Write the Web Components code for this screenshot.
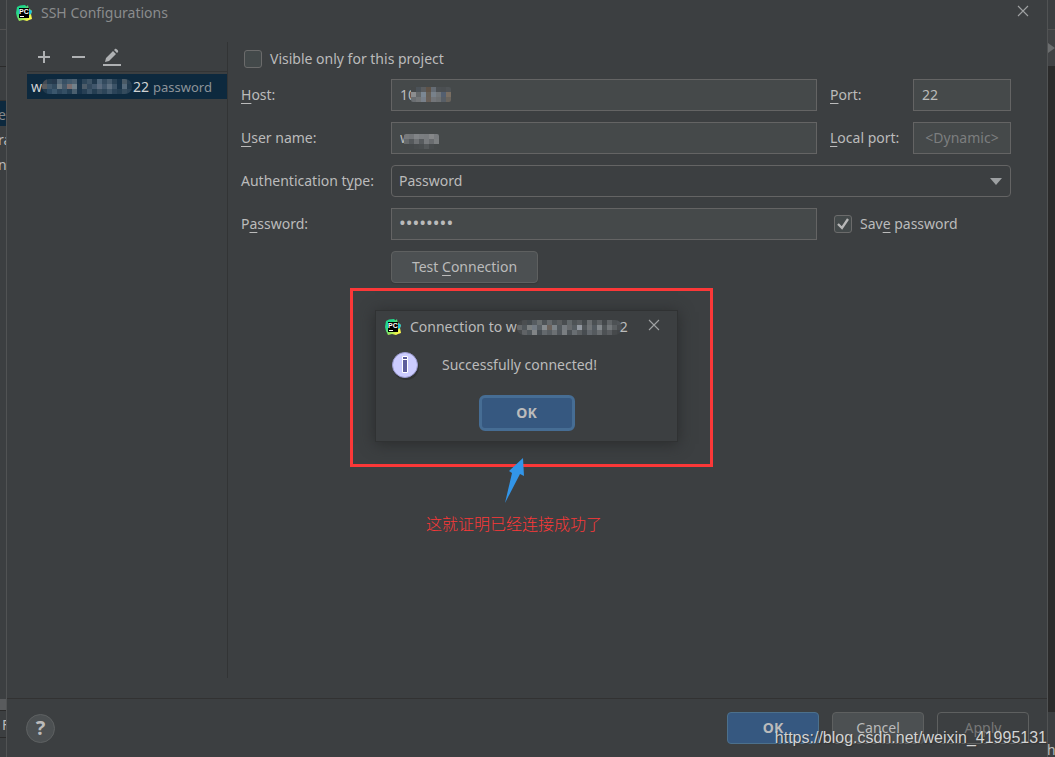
<!DOCTYPE html>
<html lang="en">
<head>
<meta charset="utf-8">
<title>SSH Configurations</title>
<style>
html, body { margin: 0; background: #3c3f41; }
body { font: 14px/20px "Noto Sans", "Noto Sans CJK SC", sans-serif; color: #bbbbbb; }
</style>
</head>
<body>
<ssh-app></ssh-app>

<template id="t-app">
<style>
:host { display: grid; grid-template-columns: 6px 1fr 7px; min-height: 100vh; position: relative; overflow: hidden; }
.watermark { position: absolute; right: 8px; bottom: 9px; font: 16px/20px "Liberation Sans", sans-serif; color: #d2d3d3; text-shadow: 1px 1px 1px #333; white-space: nowrap; }
</style>
<edge-strip side="left"></edge-strip>
<config-dialog></config-dialog>
<edge-strip side="right"></edge-strip>
<span class="watermark">https://blog.csdn.net/weixin_41995131</span>
</template>

<template id="t-strip">
<style>
:host { display: flex; flex-direction: column; overflow: hidden; background: #3c3f41; white-space: nowrap; }
div { flex: none; box-sizing: border-box; overflow: hidden; }
.toolbar { height: 30px; border-bottom: 1px solid #515151; }
.tabs { height: 37px; border-bottom: 1px solid #2b2b2b; }
.gap { height: 34px; border-bottom: 1px solid #323232; }
.row { height: 25px; line-height: 27px; text-indent: -2px; }
.sel { background: #0d293e; color: #888; }
.fill { flex: 1; }
.bar { height: 11px; background: #595b5d; }
.foot { height: 28px; border: solid #2b2b2b; border-width: 1px 0; line-height: 28px; padding-left: 2px; }
.end { height: 19px; }
.run { height: 36px; background: #414345; display: flex; align-items: center; }
.dark { flex: 1; background: #2b2b2b; }
.low { height: 45px; line-height: 20px; padding-top: 28px; }
:host([side="right"]) .low { text-indent: -1px; }
</style>
</template>

<template id="t-dialog">
<style>
:host { display: flex; flex-direction: column; position: relative; background: #3c3f41; border: solid #515354; border-width: 0 1px; box-sizing: border-box; min-width: 0; }
header { display: flex; align-items: center; height: 26px; padding: 0 18px 0 8px; color: #8a8c8d; }
header span { flex: 1; margin-left: 8px; }
close-button { padding-bottom: 4px; }
main { flex: 1; display: grid; grid-template-columns: 201px 1fr; padding: 16px 36px 20px 20px; column-gap: 13px; }
footer { display: flex; align-items: center; gap: 13px; border-top: 1px solid #323232; padding: 13px 18px 13px 19px; }
.space { flex: 1; }
.layer { position: absolute; top: 288px; left: 0; right: 0; display: flex; justify-content: center; padding-left: 9px; pointer-events: none; }
</style>
<header><app-logo></app-logo><span>SSH Configurations</span><close-button></close-button></header>
<main><config-list></config-list><config-form></config-form></main>
<footer>
<help-button></help-button><span class="space"></span>
<ide-button kind="primary">OK</ide-button><ide-button>Cancel</ide-button><ide-button kind="disabled">Apply</ide-button>
</footer>
<div class="layer"><result-note></result-note></div>
</template>

<template id="t-logo">
<style>:host { display: block; width: 18px; height: 18px; flex: none; } svg { display: block; } text { font: bold 7px "Liberation Sans", sans-serif; fill: #fff; }</style>
<svg width="18" height="18" viewBox="0 0 18 18">
<defs><linearGradient id="g" x1="0" y1="0" x2="1" y2="1"><stop offset=".3" stop-color="#21d789"/><stop offset=".6" stop-color="#9be65a"/><stop offset=".85" stop-color="#fcf84a"/></linearGradient></defs>
<path d="M5 1.500 10 1l1.500 1.500L13 1l.5 3L17 7l-1 3 1 5-3 1-2 1-4-1-4 1-2-4-1-4 1-6z" fill="url(#g)"/>
<path d="m14 5 3 2-1 3-2 1z" fill="#16bfe0"/>
<path d="M4 4h10v10H4z" fill="#000"/><text x="4" y="10">PC</text><path d="M5 12.500h4" stroke="#fff"/>
</svg>
</template>

<template id="t-close">
<style>:host { display: block; } button { display: block; padding: 0; border: 0; background: none; color: #a0a2a3; } svg { display: block; }</style>
<button aria-label="Close"><svg width="12" height="12" viewBox="0 0 12 12"><path d="m1 1 10 10M11 1 1 11" stroke="currentColor" stroke-width="1.100"/></svg></button>
</template>

<template id="t-help">
<style>:host { display: block; } button { display: grid; place-items: center; width: 29px; height: 29px; border: 1px solid #5e6162; border-radius: 50%; background: #4c5052; color: #bbb; padding: 0; font: bold 20px/20px "Noto Sans", sans-serif; }</style>
<button aria-label="Help">?</button>
</template>

<template id="t-button">
<style>
:host { display: block; }
button { box-sizing: border-box; width: 92px; height: 32px; padding: 0; border: 1px solid #5e6060; border-radius: 4px; background: #4c5052; color: #bbb; font: inherit; }
:host([kind="primary"]) button { background: #365880; border-color: #4c708c; font-weight: bold; }
:host([kind="disabled"]) button { background: #3c3f41; color: #777; }
:host([kind="wide"]) button { width: 147px; box-shadow: 0 1px 1px #35383a; }
:host([kind="focus"]) button { width: 96px; height: 36px; background: #365880; border: 3px solid #466d94; border-radius: 6px; font-weight: bold; }
u { text-underline-offset: 3px; }
</style>
<button><slot></slot></button>
</template>

<template id="t-list">
<style>
:host { display: block; border-right: 1px solid #323435; }
nav { display: flex; gap: 14px; height: 30px; align-items: center; padding-left: 7px; box-sizing: border-box; border-bottom: 1px solid #323435; }
nav button { display: block; width: 20px; height: 20px; padding: 0; border: 0; background: none; }
svg { display: block; }
.item { display: flex; align-items: center; height: 25px; margin-top: 2px; padding-left: 4px; background: #0d293e; color: #d0d2d3; }
.type { margin-left: 4px; color: #8c9399; font-size: 13px; }
pixel-mask { margin-right: 1px; }
</style>
<nav>
<button aria-label="Add"><svg width="20" height="20"><path d="M10 4v12M4 10h12" stroke="#afb1b3" stroke-width="2"/></svg></button>
<button aria-label="Remove"><svg width="20" height="20"><path d="M4 10h13" stroke="#afb1b3" stroke-width="2"/></svg></button>
<button aria-label="Edit"><svg width="20" height="20"><path d="m3 15 1-4 7-7 3 3-7 7zM12 3l1-1c1-1 4 2 3 3l-1 1zM1 17h18v2H1z" fill="#afb1b3"/></svg></button>
</nav>
<div class="item"><span>w</span><pixel-mask kind="list"></pixel-mask><span>22</span><span class="type">password</span></div>
</template>

<template id="t-form">
<style>
:host { display: grid; grid-template-columns: 150px 1fr 96px 98px; grid-template-rows: 18px repeat(5, 32px); row-gap: 11px; align-items: center; padding-top: 8px; align-content: start; }
.gapped { padding-left: 13px; white-space: nowrap; }
u { text-underline-offset: 3px; text-decoration-thickness: 1px; }
input:not([type="checkbox"]), select { box-sizing: border-box; width: 100%; height: 32px; border: 1px solid #646464; background: #45494a; color: #bbb; font: inherit; padding: 0 8px 2px; margin: 0; border-radius: 0; outline: 0; }
input::placeholder { color: #7c7e7f; opacity: 1; }
input:not([type="checkbox"])#pass { font-size: 18px; padding: 0 7px 4px; }
.port::placeholder { text-align: center; }
.field { position: relative; display: grid; }
.field pixel-mask { position: absolute; left: 20px; top: 8px; }
.user pixel-mask { left: 13px; top: 12px; }
.wide { grid-column: 2 / 5; position: relative; }
select { appearance: none; background: #3c3f41; border-radius: 4px; }
.wide select { padding: 0 7px; }
.wide svg { position: absolute; right: 9px; top: 13px; }
.check { display: flex; align-items: center; gap: 8px; }
.first { grid-column: 1 / 5; padding-left: 3px; }
.save { grid-column: 3 / 5; padding-left: 17px; white-space: nowrap; }
input[type="checkbox"] { appearance: none; box-sizing: border-box; width: 18px; height: 18px; margin: 0; border: 1px solid #6b6b6b; border-radius: 3px; background: #43494a; }
input[type="checkbox"]:checked { background: #43494a url("data:image/svg+xml,%3Csvg xmlns='http://www.w3.org/2000/svg' width='16' height='16'%3E%3Cpath d='m3 8 4 4 6-9' fill='none' stroke='%23b8b8b8' stroke-width='2.300'/%3E%3C/svg%3E"); }
ide-button { grid-column: 2; }
</style>
<div class="check first"><input type="checkbox" id="visible"><label for="visible">Visible only for this project</label></div>
<label for="host"><u>H</u>ost:</label>
<div class="field"><input id="host" value="10"><pixel-mask kind="host"></pixel-mask></div>
<label class="gapped" for="port"><u>P</u>ort:</label>
<input id="port" value="22">
<label for="user"><u>U</u>ser name:</label>
<div class="field user"><input id="user" value="w"><pixel-mask kind="user"></pixel-mask></div>
<label class="gapped" for="local"><u>L</u>ocal port:</label>
<input id="local" class="port" placeholder="&lt;Dynamic&gt;">
<label for="auth">Authentication t<u>y</u>pe:</label>
<div class="wide"><select id="auth"><option>Password</option></select><svg width="12" height="7"><path d="M0 0h12L6 7z" fill="#9da0a2"/></svg></div>
<label for="pass">P<u>a</u>ssword:</label>
<input id="pass" type="password" value="password">
<div class="check save"><input type="checkbox" id="save" checked><label for="save">Sav<u>e</u> password</label></div>
<ide-button kind="wide">Test <u>C</u>onnection</ide-button>
</template>

<template id="t-note">
<style>
:host { display: block; position: relative; }
.frame { border: 3px solid #fb3838; padding: 19px 32px 22px 22px; }
.arrow { position: absolute; left: 154px; top: 169px; }
p { margin: 46px 0 0 76px; font: 16px/20px "Noto Sans CJK SC", sans-serif; font-weight: 300; color: #fb3838; white-space: nowrap; }
</style>
<div class="frame"><message-popup></message-popup></div>
<svg class="arrow" width="22" height="48"><path d="M1 46 8 16 5 14 19 1 20 19 16 17z" fill="#3295e8"/></svg>
<p>这就证明已经连接成功了</p>
</template>

<template id="t-popup">
<style>
:host { display: block; width: 303px; box-sizing: border-box; height: 132px; border: 1px solid #303233; background: #3c3f41; box-shadow: 0 2px 14px #2a2c2d; pointer-events: auto; }
header { display: flex; align-items: center; height: 32px; padding: 0 17px 0 8px; }
header .title { margin-left: 8px; flex: 1; display: flex; align-items: center; white-space: pre; }
close-button { padding-bottom: 4px; }
.body { display: flex; align-items: center; height: 44px; padding-left: 15px; gap: 22px; }
.actions { display: flex; justify-content: center; padding: 8px 0 0; }
svg { display: block; }
pixel-mask { margin-right: -2px; }
</style>
<header><app-logo></app-logo><span class="title">Connection to w<pixel-mask kind="title"></pixel-mask>2</span><close-button></close-button></header>
<div class="body"><svg width="29" height="30"><circle cx="15" cy="17" r="13" fill="#292b2c" opacity=".6"/><circle cx="14" cy="15" r="12.500" fill="#ccccff" stroke="#9b9bd0"/><path d="M11.500 6.500h5v3h-5zM11.500 9.500h5v13h-5z" fill="#5d5d9c" stroke="#fff"/></svg><span>Successfully connected!</span></div>
<div class="actions"><ide-button kind="focus">OK</ide-button></div>
</template>

<script>
function define(name, id) {
  customElements.define(name, class extends HTMLElement {
    constructor() {
      super();
      this.attachShadow({ mode: "open" }).append(document.getElementById(id).content.cloneNode(true));
    }
  });
}

const masks = {
  list: { rows: ["454c56 263d4f 26394c 526676 385064 425a6d 4d6171 173248 2e4659 3d5365 20384c 4d6478 334a5e 465b6d 2a4255 173248 4a5a66 283f52", "5a5b5e 40576a 314a5e 6c7a83 44586a 796e70 71818b 1a3449 4d5c69 33495d 40566b 5a6a7d 40566b 5d6f80 3c5367 183349 55697a 213a4e", "213a4e 2c4961 3b576d 2b455b 344f64 243f54 4a5f6f 18334a 263f54 3a5266 243e52 384e60 2c4559 40576a 2b4459 233d51 344b5d 2b4357"], size: 5, radius: 7 },
  host: { rows: ["454849 4b5258 5a5d60 5f5348 656c74 4c5053 4b4f52 4f5356", "8b8d8f 64686a 7b8793 665f56 78818a 727679 535f70 796e62", "6a6e72 737678 78808a 685f58 727579 6d7072 575e66 69645d"], size: 5, radius: 2 },
  user: { rows: ["77797b 737679 818487 7b7e81 797c7f 858789 797c7f", "66696b 55595c 6e7174 575b5e 777a7d 696c6f 7b7e80", "454849 45494b 484c4e 4a4e50 54585a 484c4e 45494a"], size: 5, radius: 2 },
  title: { rows: ["424547 4b4e50 454b4f 565c61 696e70 4e5357 65696c 505558 5a5d5f 494d50 62686b 4e5356 585c5f 44494c 696d70 4b5053 5d6164 44484b 606467 4d5154 505458", "646769 50565a 7b7f80 737b84 5a6065 868b8f 6b625c 7c8388 53595d 767b80 676a6d 565d62 9298a0 51565a 6f7376 535a60 82878b 515659 727679 5b5f62 4a4d50", "484b4d 606366 51575b 818486 484e53 64696d 585d61 6c7073 51565b 7a7e81 4c5155 696e72 5a5e61 474c50 62676c 555a5e 696d70 4d5154 595c5f 46494b 424547"], size: 5, radius: 7 }
};

customElements.define("pixel-mask", class extends HTMLElement {
  connectedCallback() {
    const m = masks[this.getAttribute("kind")];
    const rows = m.rows.map(r => r.split(" "));
    const w = rows[0].length * m.size, h = rows.length * m.size;
    const cells = rows.map((r, y) => r.map((c, x) => `<rect x="${x * m.size}" y="${y * m.size}" width="${m.size}" height="${m.size}" fill="#${c}"/>`).join("")).join("");
    const root = this.shadowRoot || this.attachShadow({ mode: "open" });
    root.innerHTML = `<style>:host{display:block;flex:none;overflow:hidden;border-radius:${m.radius}px}svg{display:block}</style><svg width="${w}" height="${h}" shape-rendering="crispEdges">${cells}</svg>`;
  }
});

customElements.define("edge-strip", class extends HTMLElement {
  connectedCallback() {
    if (this.shadowRoot) return;
    const root = this.attachShadow({ mode: "open" });
    root.append(document.getElementById("t-strip").content.cloneNode(true));
    const box = document.createElement("template");
    box.innerHTML = this.getAttribute("side") === "left"
      ? '<div class="toolbar"></div><div class="tabs"></div><div class="gap"></div><div class="row sel">e</div><div class="row">ra</div><div class="row">nc</div><div class="fill"></div><div class="bar"></div><div class="foot">F</div><div class="end"></div>'
      : '<div class="toolbar"></div><div class="run"><svg width="7" height="12"><path d="M0 1 7 6 0 11z" fill="#6b6d6e"/></svg></div><div class="dark"></div><div class="low">h</div>';
    root.append(box.content);
  }
});

define("app-logo", "t-logo");
define("close-button", "t-close");
define("help-button", "t-help");
define("ide-button", "t-button");
define("config-list", "t-list");
define("config-form", "t-form");
define("message-popup", "t-popup");
define("result-note", "t-note");
define("config-dialog", "t-dialog");
define("ssh-app", "t-app");
</script>
</body>
</html>
